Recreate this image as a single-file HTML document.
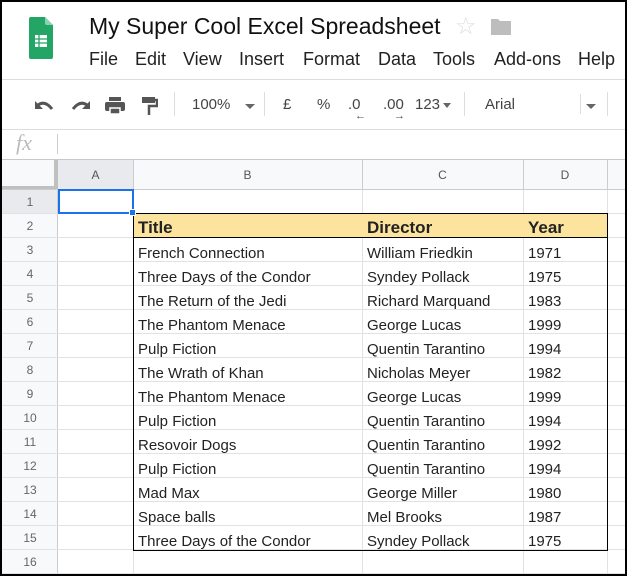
<!DOCTYPE html><html><head><style>
*{margin:0;padding:0;box-sizing:border-box}
body{width:627px;height:576px;position:relative;overflow:hidden;background:#fff;font-family:"Liberation Sans",sans-serif;}
.a{position:absolute}
.frame{position:absolute;left:0;top:0;width:627px;height:576px;border:2px solid #000;pointer-events:none;z-index:10}
.menu span{position:absolute;top:49px;font-size:18px;color:#222}
.tb{position:absolute;top:96px;font-size:15px;color:#444}
.vl{position:absolute;width:1px;background:#ddd}
.hl{position:absolute;height:1px;background:#e2e2e2}
.rh{position:absolute;left:2px;width:56px;text-align:center;font-size:12px;color:#666;height:24px;line-height:24px}
.ch{position:absolute;top:160px;height:30px;line-height:30px;text-align:center;font-size:12px;color:#555}
.c{position:absolute;font-size:15px;color:#222;height:24px;line-height:25px;white-space:nowrap;margin-top:3px}
</style></head><body>
<svg class="a" style="left:29px;top:17px" width="24" height="42" viewBox="0 0 24 42">
<path d="M2 0H16L24 8V40a2 2 0 0 1-2 2H2a2 2 0 0 1-2-2V2a2 2 0 0 1 2-2z" fill="#23a566"/>
<path d="M16 0L24 8H18a2 2 0 0 1-2-2z" fill="#8ed1b1"/>
<rect x="6" y="18" width="12" height="12" fill="#fff"/>
<path d="M6 22H18M6 26H18M10 18V30" stroke="#23a566" stroke-width="1.3"/>
</svg>
<div class="a" style="left:89px;top:13px;font-size:23px;color:#111">My Super Cool Excel Spreadsheet</div>
<div class="a" style="left:455px;top:12px;font-size:24px;color:#ddd">☆</div>
<svg class="a" style="left:491px;top:18px" width="20" height="17"><path d="M0 1h7l2 2h11v14H0z" fill="#bdbdbd"/></svg>
<div class="menu"><span style="left:89px">File</span><span style="left:135px">Edit</span><span style="left:183px">View</span><span style="left:239px">Insert</span><span style="left:303px">Format</span><span style="left:378px">Data</span><span style="left:433px">Tools</span><span style="left:494px">Add-ons</span><span style="left:578px">Help</span></div>
<div class="hl" style="left:0;top:79px;width:627px;background:#ddd"></div>
<svg class="a" style="left:35px;top:99px" width="20" height="14"><path d="M3 6 Q10 1 17 10" stroke="#555" stroke-width="3" fill="none"/><path d="M0 2V10H8z" fill="#555"/></svg>
<svg class="a" style="left:70px;top:99px" width="20" height="14"><path d="M17 6 Q10 1 3 10" stroke="#555" stroke-width="3" fill="none"/><path d="M20 2V10H12z" fill="#555"/></svg>
<svg class="a" style="left:105px;top:97px" width="20" height="18"><rect x="4" y="0" width="12" height="4" fill="#555"/><rect x="0" y="5" width="20" height="9" rx="2" fill="#555"/><rect x="5" y="11" width="10" height="6" fill="#555" stroke="#fff" stroke-width="1.5"/></svg>
<svg class="a" style="left:142px;top:97px" width="16" height="19"><rect x="0" y="0" width="13" height="6" fill="#555"/><path d="M13 3h2v6H7v9" stroke="#555" stroke-width="2.5" fill="none"/></svg>
<div class="vl" style="left:174px;top:92px;height:24px"></div>
<div class="tb" style="left:192px">100%</div>
<div class="a" style="left:245px;top:104px;border:5px solid transparent;border-top:5px solid #666;border-bottom:0"></div>
<div class="vl" style="left:264px;top:92px;height:24px"></div>
<div class="tb" style="left:283px">£</div>
<div class="tb" style="left:317px">%</div>
<div class="tb" style="left:348px">.0</div><div class="a" style="left:355px;top:110px;font-size:11px;color:#444">←</div>
<div class="tb" style="left:383px">.00</div><div class="a" style="left:394px;top:110px;font-size:11px;color:#444">→</div>
<div class="tb" style="left:415px">123</div>
<div class="a" style="left:443px;top:103px;border:4px solid transparent;border-top:5px solid #666;border-bottom:0"></div>
<div class="vl" style="left:464px;top:92px;height:24px"></div>
<div class="tb" style="left:485px">Arial</div>
<div class="vl" style="left:580px;top:94px;height:20px"></div>
<div class="a" style="left:586px;top:104px;border:5px solid transparent;border-top:5px solid #666;border-bottom:0"></div>
<div class="vl" style="left:607px;top:92px;height:24px"></div>
<div class="hl" style="left:0;top:129px;width:627px;background:#ddd"></div>
<div class="a" style="left:16px;top:130px;font-family:'Liberation Serif',serif;font-style:italic;font-size:22px;color:#bbb">fx</div>
<div class="vl" style="left:57px;top:134px;height:20px;background:#ccc"></div>
<div class="hl" style="left:0;top:159px;width:627px;background:#c8c8c8"></div>
<div class="a" style="left:0;top:160px;width:627px;height:30px;background:#f8f9fa"></div>
<div class="a" style="left:0;top:160px;width:58px;height:416px;background:#f8f9fa"></div>
<div class="a" style="left:0;top:160px;width:58px;height:30px;background:#f8f9fa;border-right:4px solid #c0c0c0;border-bottom:4px solid #c0c0c0"></div>
<div class="a" style="left:58px;top:160px;width:75px;height:30px;background:#e8eaed"></div>
<div class="a" style="left:0;top:190px;width:58px;height:24px;background:#e8eaed"></div>
<div class="vl" style="left:133px;top:160px;height:30px;background:#ccc"></div>
<div class="vl" style="left:362px;top:160px;height:30px;background:#ccc"></div>
<div class="vl" style="left:523px;top:160px;height:30px;background:#ccc"></div>
<div class="vl" style="left:607px;top:160px;height:30px;background:#ccc"></div>
<div class="hl" style="left:0;top:189px;width:627px;background:#ccc"></div>
<div class="ch" style="left:58px;width:75px">A</div>
<div class="ch" style="left:133px;width:229px">B</div>
<div class="ch" style="left:362px;width:161px">C</div>
<div class="ch" style="left:523px;width:84px">D</div>
<div class="vl" style="left:57px;top:190px;height:386px;background:#ccc"></div>
<div class="vl" style="left:133px;top:190px;height:386px;background:#e2e2e2"></div>
<div class="vl" style="left:362px;top:190px;height:386px;background:#e2e2e2"></div>
<div class="vl" style="left:523px;top:190px;height:386px;background:#e2e2e2"></div>
<div class="vl" style="left:607px;top:190px;height:386px;background:#e2e2e2"></div>
<div class="hl" style="left:0;top:213px;width:627px"></div>
<div class="hl" style="left:0;top:237px;width:627px"></div>
<div class="hl" style="left:0;top:261px;width:627px"></div>
<div class="hl" style="left:0;top:285px;width:627px"></div>
<div class="hl" style="left:0;top:309px;width:627px"></div>
<div class="hl" style="left:0;top:333px;width:627px"></div>
<div class="hl" style="left:0;top:357px;width:627px"></div>
<div class="hl" style="left:0;top:381px;width:627px"></div>
<div class="hl" style="left:0;top:405px;width:627px"></div>
<div class="hl" style="left:0;top:429px;width:627px"></div>
<div class="hl" style="left:0;top:453px;width:627px"></div>
<div class="hl" style="left:0;top:477px;width:627px"></div>
<div class="hl" style="left:0;top:501px;width:627px"></div>
<div class="hl" style="left:0;top:525px;width:627px"></div>
<div class="hl" style="left:0;top:549px;width:627px"></div>
<div class="hl" style="left:0;top:573px;width:627px"></div>
<div class="rh" style="top:190px">1</div><div class="rh" style="top:214px">2</div><div class="rh" style="top:238px">3</div><div class="rh" style="top:262px">4</div><div class="rh" style="top:286px">5</div><div class="rh" style="top:310px">6</div><div class="rh" style="top:334px">7</div><div class="rh" style="top:358px">8</div><div class="rh" style="top:382px">9</div><div class="rh" style="top:406px">10</div><div class="rh" style="top:430px">11</div><div class="rh" style="top:454px">12</div><div class="rh" style="top:478px">13</div><div class="rh" style="top:502px">14</div><div class="rh" style="top:526px">15</div><div class="rh" style="top:550px">16</div>
<div class="a" style="left:58px;top:189px;width:76px;height:25px;border:2px solid #1a73e8"></div>
<div class="a" style="left:129px;top:209px;width:7px;height:7px;background:#1a73e8;border:1px solid #fff;z-index:3"></div>
<div class="a" style="left:133px;top:213px;width:475px;height:25px;background:#fde49e"></div>
<div class="a" style="left:133px;top:213px;width:475px;height:338px;border:1px solid #000"></div>
<div class="hl" style="left:133px;top:237px;width:475px;background:#000"></div>
<div class="c" style="left:138px;top:212px;font-weight:bold;font-size:17px">Title</div>
<div class="c" style="left:367px;top:212px;font-weight:bold;font-size:17px">Director</div>
<div class="c" style="left:528px;top:212px;font-weight:bold;font-size:17px">Year</div>
<div class="c" style="left:138px;top:238px">French Connection</div><div class="c" style="left:367px;top:238px">William Friedkin</div><div class="c" style="left:528px;top:238px">1971</div>
<div class="c" style="left:138px;top:262px">Three Days of the Condor</div><div class="c" style="left:367px;top:262px">Syndey Pollack</div><div class="c" style="left:528px;top:262px">1975</div>
<div class="c" style="left:138px;top:286px">The Return of the Jedi</div><div class="c" style="left:367px;top:286px">Richard Marquand</div><div class="c" style="left:528px;top:286px">1983</div>
<div class="c" style="left:138px;top:310px">The Phantom Menace</div><div class="c" style="left:367px;top:310px">George Lucas</div><div class="c" style="left:528px;top:310px">1999</div>
<div class="c" style="left:138px;top:334px">Pulp Fiction</div><div class="c" style="left:367px;top:334px">Quentin Tarantino</div><div class="c" style="left:528px;top:334px">1994</div>
<div class="c" style="left:138px;top:358px">The Wrath of Khan</div><div class="c" style="left:367px;top:358px">Nicholas Meyer</div><div class="c" style="left:528px;top:358px">1982</div>
<div class="c" style="left:138px;top:382px">The Phantom Menace</div><div class="c" style="left:367px;top:382px">George Lucas</div><div class="c" style="left:528px;top:382px">1999</div>
<div class="c" style="left:138px;top:406px">Pulp Fiction</div><div class="c" style="left:367px;top:406px">Quentin Tarantino</div><div class="c" style="left:528px;top:406px">1994</div>
<div class="c" style="left:138px;top:430px">Resovoir Dogs</div><div class="c" style="left:367px;top:430px">Quentin Tarantino</div><div class="c" style="left:528px;top:430px">1992</div>
<div class="c" style="left:138px;top:454px">Pulp Fiction</div><div class="c" style="left:367px;top:454px">Quentin Tarantino</div><div class="c" style="left:528px;top:454px">1994</div>
<div class="c" style="left:138px;top:478px">Mad Max</div><div class="c" style="left:367px;top:478px">George Miller</div><div class="c" style="left:528px;top:478px">1980</div>
<div class="c" style="left:138px;top:502px">Space balls</div><div class="c" style="left:367px;top:502px">Mel Brooks</div><div class="c" style="left:528px;top:502px">1987</div>
<div class="c" style="left:138px;top:526px">Three Days of the Condor</div><div class="c" style="left:367px;top:526px">Syndey Pollack</div><div class="c" style="left:528px;top:526px">1975</div>
<div class="frame"></div>
</body></html>
